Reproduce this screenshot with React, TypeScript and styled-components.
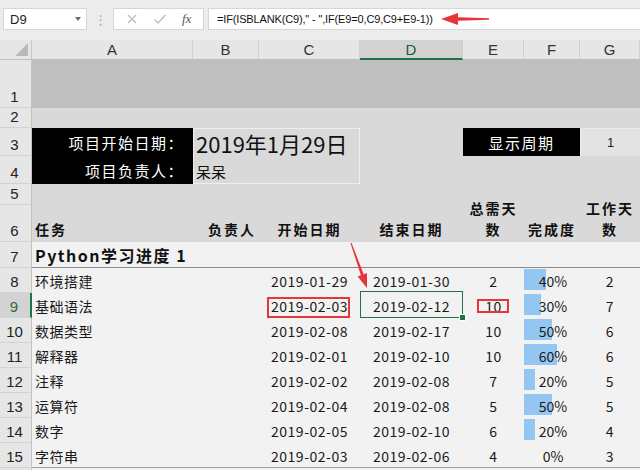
import React from "react";
import styled, { createGlobalStyle, css } from "styled-components";

const CJK = `"Noto Sans CJK SC", "Noto Sans", sans-serif`;
const UI = `"Liberation Sans", Arial, sans-serif`;
const GREEN = "#217346";
const RED = "#e5363c";

const GlobalStyle = createGlobalStyle`
  html, body { margin: 0; padding: 0; background: #f2f2f2; }
  body { overflow: hidden; }
`;

type Pos = { $c: string; $r: string };

const place = css<Pos>`
  grid-column: ${(p) => p.$c};
  grid-row: ${(p) => p.$r};
`;

const Root = styled.div`
  position: relative;
  width: 640px;
  height: 470px;
  overflow: hidden;
  background: #f2f2f2;
`;

// formula bar
const Toolbar = styled.div`
  height: 40px;
  box-sizing: border-box;
  padding: 8px 0 0 3px;
  display: flex;
  align-items: flex-start;
  background: #ececec;
`;

const NameBox = styled.div`
  width: 84px;
  height: 22px;
  box-sizing: border-box;
  border: 1px solid #d6d6d6;
  background: #fff;
  display: flex;
  align-items: center;
  justify-content: space-between;
  padding: 0 5px 0 6px;
  font: 13px ${UI};
  color: #222;
`;

const Caret = styled.span`
  width: 0;
  height: 0;
  border-left: 3px solid transparent;
  border-right: 3px solid transparent;
  border-top: 4px solid #6a6a6a;
`;

const Grip = styled.div`
  width: 26px;
  height: 22px;
  display: flex;
  align-items: center;
  justify-content: center;
  color: #b0b0b0;
  font: 13px ${UI};
`;

const FxBox = styled.div`
  width: 91px;
  height: 22px;
  box-sizing: border-box;
  border: 1px solid #d6d6d6;
  background: #fff;
  display: flex;
  align-items: center;
  justify-content: space-around;
  padding: 0 4px;
`;

const FxLabel = styled.span`
  font: italic 13px "Liberation Serif", serif;
  color: #555;
`;

const FormulaBox = styled.div`
  flex: 1;
  height: 22px;
  margin-left: 4px;
  box-sizing: border-box;
  border: 1px solid #d6d6d6;
  border-right: none;
  background: #fff;
  padding-left: 8px;
  display: flex;
  align-items: center;
  font: 11px ${UI};
  letter-spacing: -0.15px;
  color: #111;
  white-space: nowrap;
`;

// sheet
const Sheet = styled.div`
  display: grid;
  grid-template-columns: 32px 161px 66px 101px 103px 61px 56px 60px;
  grid-template-rows: 20px 48px 20px 28px 28px 21px 37px 26px repeat(8, 25px) 2px;
  font-family: ${CJK};
  color: #111;
`;

const Corner = styled.div<Pos>`
  ${place};
  position: relative;
  background: #e6e6e6;
  border-right: 1px solid #c6c6c6;
  border-bottom: 1px solid #bdbdbd;
  &::after {
    content: "";
    position: absolute;
    right: 3px;
    bottom: 3px;
    border-left: 13px solid transparent;
    border-bottom: 13px solid #b9b9b9;
  }
`;

const ColHead = styled.div<Pos & { $active?: boolean }>`
  ${place};
  display: flex;
  align-items: center;
  justify-content: center;
  box-sizing: border-box;
  background: ${(p) => (p.$active ? "#d3d3d3" : "#e6e6e6")};
  border-right: 1px solid #cfcfcf;
  border-bottom: ${(p) => (p.$active ? `2px solid ${GREEN}` : "1px solid #bdbdbd")};
  font: 15px ${UI};
  color: ${(p) => (p.$active ? "#1f5c38" : "#333")};
`;

const RowHead = styled.div<Pos & { $active?: boolean }>`
  ${place};
  display: flex;
  align-items: flex-end;
  justify-content: center;
  box-sizing: border-box;
  padding: 0 2px 2px 0;
  background: ${(p) => (p.$active ? "#d3d3d3" : "#e6e6e6")};
  border-bottom: 1px solid #d2d2d2;
  border-right: ${(p) => (p.$active ? `2px solid ${GREEN}` : "1px solid #c2c2c2")};
  font: 15px/17px ${UI};
  color: ${(p) => (p.$active ? "#2d6a45" : "#222")};
`;

const Band = styled.div<Pos & { $bg: string; $line?: string }>`
  ${place};
  background: ${(p) => p.$bg};
  border-bottom: ${(p) => (p.$line ? `1px solid ${p.$line}` : "none")};
`;

const BlackCell = styled.div<Pos & { $align: string }>`
  ${place};
  display: flex;
  align-items: flex-end;
  justify-content: ${(p) => p.$align};
  padding: 0 9px 3px 9px;
  background: #000;
  color: #fff;
  font-size: 15px;
  letter-spacing: 1.5px;
  line-height: 20px;
`;

const Frame = styled.div<Pos>`
  ${place};
  border: 1px solid #efefef;
`;

const BigDate = styled.div<Pos>`
  ${place};
  display: flex;
  align-items: flex-end;
  padding-left: 3px;
  font-size: 22px;
  line-height: 26px;
  color: #111;
  white-space: nowrap;
`;

const Owner = styled.div<Pos>`
  ${place};
  display: flex;
  align-items: center;
  padding: 2px 0 0 3px;
  font-size: 15px;
`;

const PeriodValue = styled.div<Pos>`
  ${place};
  display: flex;
  align-items: center;
  justify-content: center;
  background: #e3e3e3;
  border-top: 1px solid #ececec;
  border-left: 1px solid #ececec;
  font: 13px ${UI};
  color: #222;
`;

const HeadCell = styled.div<Pos & { $align: string }>`
  ${place};
  display: flex;
  align-items: flex-end;
  justify-content: ${(p) => p.$align};
  text-align: center;
  padding: 0 3px 2px;
  font-size: 14px;
  font-weight: 700;
  letter-spacing: 2px;
  line-height: 21px;
  white-space: pre-line;
`;

const TitleCell = styled.div<Pos>`
  ${place};
  display: flex;
  align-items: center;
  padding-left: 3px;
  font-size: 16px;
  font-weight: 700;
  letter-spacing: 1.5px;
  white-space: nowrap;
`;

const DataCell = styled.div<Pos & { $align: string }>`
  ${place};
  position: relative;
  display: flex;
  align-items: center;
  justify-content: ${(p) => p.$align};
  padding: 0 3px;
  font-size: 14px;
  letter-spacing: 0.5px;
  color: #1a1a1a;
  white-space: nowrap;
`;

const PctCell = styled.div<Pos>`
  ${place};
  position: relative;
  display: flex;
  align-items: center;
  justify-content: center;
  font-size: 14px;
  color: #1a1a1a;
`;

const Bar = styled.div`
  position: absolute;
  left: 0;
  top: 1px;
  bottom: 3px;
  background: #94c6f2;
`;

const PctText = styled.span`
  position: relative;
  padding-left: 2px;
`;

const Mark = styled.div<{ $t: number; $r: number; $b: number; $l: number }>`
  position: absolute;
  top: ${(p) => p.$t}px;
  right: ${(p) => p.$r}px;
  bottom: ${(p) => p.$b}px;
  left: ${(p) => p.$l}px;
  border: 2px solid ${RED};
`;

const Selection = styled.div`
  position: absolute;
  top: -2px;
  left: 0;
  right: 0;
  bottom: 0;
  border: 1.5px solid ${GREEN};
  &::after {
    content: "";
    position: absolute;
    right: -4px;
    bottom: -4px;
    width: 5px;
    height: 5px;
    background: ${GREEN};
    border: 1px solid #fff;
  }
`;

const Overlay = styled.svg`
  position: absolute;
  left: 0;
  top: 0;
  pointer-events: none;
`;

const tasks: [string, string, string, number, number, number][] = [
  ["环境搭建", "2019-01-29", "2019-01-30", 2, 40, 2],
  ["基础语法", "2019-02-03", "2019-02-12", 10, 30, 7],
  ["数据类型", "2019-02-08", "2019-02-17", 10, 50, 6],
  ["解释器", "2019-02-01", "2019-02-10", 10, 60, 6],
  ["注释", "2019-02-02", "2019-02-08", 7, 20, 5],
  ["运算符", "2019-02-04", "2019-02-08", 5, 50, 5],
  ["数字", "2019-02-05", "2019-02-10", 6, 20, 4],
  ["字符串", "2019-02-03", "2019-02-06", 4, 0, 3],
];

const letters = ["A", "B", "C", "D", "E", "F", "G"];

export default function App() {
  return (
    <Root>
      <GlobalStyle />
      <Toolbar>
        <NameBox>
          D9
          <Caret />
        </NameBox>
        <Grip>⋮</Grip>
        <FxBox>
          <svg width="12" height="12" viewBox="0 0 12 12">
            <path d="M2 2 L10 10 M10 2 L2 10" stroke="#bdbdbd" strokeWidth="1.3" />
          </svg>
          <svg width="14" height="12" viewBox="0 0 14 12">
            <path d="M1.5 6.5 L5 10 L12.5 2" stroke="#bdbdbd" strokeWidth="1.4" fill="none" />
          </svg>
          <FxLabel>fx</FxLabel>
        </FxBox>
        <FormulaBox>=IF(ISBLANK(C9),&quot; - &quot;,IF(E9=0,C9,C9+E9-1))</FormulaBox>
      </Toolbar>

      <Sheet>
        <Corner $c="1" $r="1" />
        {letters.map((l, i) => (
          <ColHead key={l} $c={`${i + 2}`} $r="1" $active={l === "D"}>
            {l}
          </ColHead>
        ))}
        {Array.from({ length: 15 }, (_, i) => (
          <RowHead key={i} $c="1" $r={`${i + 2}`} $active={i + 1 === 9}>
            {i + 1}
          </RowHead>
        ))}
        <RowHead $c="1" $r="17" />

        <Band $c="2 / -1" $r="2" $bg="#bfbfbf" />
        <Band $c="2 / -1" $r="3 / 8" $bg="#d9d9d9" />
        <Band $c="2 / -1" $r="8" $bg="#f2f2f2" $line="#8a8a8a" />
        <Band $c="2 / -1" $r="9 / 17" $bg="#f2f2f2" $line="#a0a0a0" />

        <BlackCell $c="2" $r="4" $align="flex-end">项目开始日期：</BlackCell>
        <BlackCell $c="2" $r="5" $align="flex-end">项目负责人：</BlackCell>
        <Frame $c="3 / 5" $r="4 / 6" />
        <BigDate $c="3 / 5" $r="4">2019年1月29日</BigDate>
        <Owner $c="3 / 5" $r="5">呆呆</Owner>
        <BlackCell $c="6 / 8" $r="4" $align="center">显示周期</BlackCell>
        <PeriodValue $c="8" $r="4">1</PeriodValue>

        <HeadCell $c="2" $r="7" $align="flex-start">任务</HeadCell>
        <HeadCell $c="3" $r="7" $align="flex-end">负责人</HeadCell>
        <HeadCell $c="4" $r="7" $align="center">开始日期</HeadCell>
        <HeadCell $c="5" $r="7" $align="center">结束日期</HeadCell>
        <HeadCell $c="6" $r="7" $align="center">{"总需天\n数"}</HeadCell>
        <HeadCell $c="7" $r="7" $align="center">完成度</HeadCell>
        <HeadCell $c="8" $r="7" $align="center">{"工作天\n数"}</HeadCell>

        <TitleCell $c="2 / 5" $r="8">Python学习进度 1</TitleCell>

        {tasks.map(([name, start, end, days, pct, work], i) => {
          const r = `${i + 9}`;
          const selected = i === 1;
          return (
            <React.Fragment key={name}>
              <DataCell $c="2" $r={r} $align="flex-start">{name}</DataCell>
              <DataCell $c="4" $r={r} $align="center">
                {start}
                {selected && <Mark $t={4} $r={10} $b={0} $l={8} />}
              </DataCell>
              <DataCell $c="5" $r={r} $align="center">
                {end}
                {selected && <Selection />}
              </DataCell>
              <DataCell $c="6" $r={r} $align="center">
                {days}
                {selected && <Mark $t={6} $r={15} $b={5} $l={14} />}
              </DataCell>
              <PctCell $c="7" $r={r}>
                <Bar style={{ width: `${pct * 0.55}px` }} />
                <PctText>{pct}%</PctText>
              </PctCell>
              <DataCell $c="8" $r={r} $align="center">{work}</DataCell>
            </React.Fragment>
          );
        })}
      </Sheet>

      <Overlay width="640" height="470" viewBox="0 0 640 470">
        <polygon
          points="489,18.3 458,17.2 458,13 441,19 458,25 458,20.8 489,19.7"
          fill={RED}
        />
        <polygon
          points="351.5,242.8 363.7,274.3 367,273.1 367,288 357.6,276.5 360.9,275.3 350.5,243.2"
          fill={RED}
        />
      </Overlay>
    </Root>
  );
}
